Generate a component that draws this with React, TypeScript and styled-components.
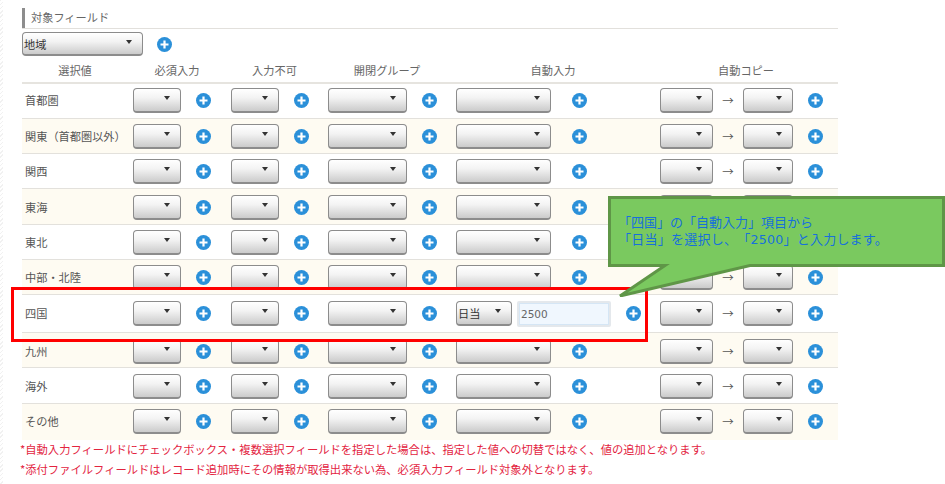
import styled, { createGlobalStyle } from "styled-components";

const GlobalStyle = createGlobalStyle`
  html, body {
    margin: 0;
    padding: 0;
    background: #fff;
  }
  body {
    font-family: "Noto Sans CJK JP", "Noto Sans", sans-serif;
    color: #555;
  }
`;

const Page = styled.div`
  position: relative;
  width: 945px;
  height: 484px;
  overflow: hidden;
  padding: 8px 107px 0 22px;
  box-sizing: border-box;
`;

const Hatch = styled.div`
  position: absolute;
  left: 0;
  top: 0;
  bottom: 0;
  width: 3px;
  background: repeating-linear-gradient(135deg, #f1f1f1 0 1px, #fff 1px 3px);
`;

const Title = styled.h2`
  margin: 0;
  height: 20px;
  line-height: 19px;
  border-bottom: 1px solid #e2e0dc;
  font-size: 11.2px;
  font-weight: 400;
  color: #666;
  display: flex;
`;

const TitleBar = styled.span`
  width: 3px;
  height: 20px;
  background: #8d8d8d;
  margin-right: 6px;
`;

const FieldRow = styled.div`
  display: flex;
  align-items: center;
  gap: 14px;
  height: 24px;
  margin-top: 3px;
`;

const Select = styled.button<{ $w: number }>`
  position: relative;
  flex: none;
  width: ${(p) => p.$w}px;
  height: 24.5px;
  padding: 0 0 0 1px;
  border: 1px solid #8c8c8c;
  border-bottom-width: 2px;
  border-radius: 4px;
  background: linear-gradient(#fff, #f3f3f3 40%, #cbcbcb);
  font: inherit;
  font-size: 11.2px;
  line-height: 20px;
  color: #333;
  text-align: left;
  box-sizing: border-box;
  &::after {
    content: "";
    position: absolute;
    right: 10px;
    top: 7px;
    border-left: 3px solid transparent;
    border-right: 3px solid transparent;
    border-top: 4px solid #333;
  }
`;

const Head = styled.div`
  display: grid;
  grid-template-columns: 111px 98px 97px 128px 204px 178px;
  height: 22px;
  margin-top: 4px;
  border-bottom: 2px solid #e6e4df;
`;

const HeadCell = styled.div<{ $pad?: number }>`
  text-align: center;
  font-size: 11.2px;
  line-height: 20px;
  color: #666;
  padding-right: ${(p) => p.$pad ?? 10}px;
`;

const Row = styled.div<{ $h: number; $top: number; $alt: boolean; $last: boolean }>`
  display: grid;
  grid-template-columns: 111px 98px 97px 128px 204px 178px;
  height: ${(p) => p.$h}px;
  box-sizing: border-box;
  padding-top: ${(p) => p.$top}px;
  border-bottom: 1px solid ${(p) => (p.$last ? "transparent" : "#e3e1dc")};
  background: ${(p) => (p.$alt ? "#fefbf2" : "#fff")};
`;

const Label = styled.div`
  font-size: 11.2px;
  line-height: 24px;
  padding-left: 3px;
  color: #555;
  white-space: nowrap;
  text-spacing-trim: space-all;
`;

const Cell = styled.div<{ $gap: number }>`
  display: flex;
  align-items: flex-start;
  gap: ${(p) => p.$gap}px;
`;

const PlusWrap = styled.span`
  flex: none;
  width: 15px;
  height: 24px;
  display: flex;
  align-items: center;
`;

const Arrow = styled.span`
  flex: none;
  width: 30px;
  text-align: center;
  font-size: 11.5px;
  line-height: 24px;
  color: #555;
`;

const PlusGap = styled.span`
  flex: none;
  width: 14.5px;
`;

const AmountInput = styled.input`
  flex: none;
  width: 94px;
  height: 26px;
  margin-left: -9.5px;
  padding: 0 0 0 2px;
  border: 2px solid #e4e8ec;
  outline: 1px solid #d5e6f5;
  outline-offset: -3px;
  border-radius: 2px;
  background: #f0f7fe;
  font-family: "DejaVu Sans", sans-serif;
  font-size: 10.5px;
  color: #666;
  box-sizing: border-box;
`;

const Notes = styled.div`
  margin: -1px 0 0 -2px;
  font-size: 11.3px;
  color: #e3243f;
  white-space: nowrap;
`;

const Note = styled.p`
  margin: 0;
  line-height: 20px;
`;

const Highlight = styled.div`
  position: absolute;
  left: 11px;
  top: 287px;
  width: 637px;
  height: 55px;
  border: 3px solid #f00;
  box-sizing: border-box;
`;

const Callout = styled.div`
  position: absolute;
  left: 608px;
  top: 196px;
  width: 337px;
  height: 101px;
`;

const CalloutShape = styled.svg`
  position: absolute;
  left: 0;
  top: 0;
`;

const CalloutText = styled.div`
  position: relative;
  padding: 18px 0 0 10px;
  font-size: 13px;
  line-height: 16.5px;
  color: #1770dc;
  white-space: nowrap;
  text-spacing-trim: space-all;
`;

const CalloutLine = styled.div<{ $spacing?: number }>`
  letter-spacing: ${(p) => p.$spacing ?? 0}px;
`;

const CalloutNumber = styled.span`
  font-family: "DejaVu Sans", sans-serif;
  font-size: 12.6px;
`;

function PlusIcon() {
  return (
    <svg width="15" height="15" viewBox="0 0 15 15">
      <circle cx="7.5" cy="7.5" r="7.5" fill="#2b90d9" />
      <path d="M7.5 3.5v8M3.5 7.5h8" stroke="#fff" strokeWidth="2.2" />
    </svg>
  );
}

function Plus() {
  return (
    <PlusWrap>
      <PlusIcon />
    </PlusWrap>
  );
}

const rows = [
  { name: "首都圏", h: 35, top: 4 },
  { name: "関東（首都圏以外）", h: 35, top: 5 },
  { name: "関西", h: 35, top: 5 },
  { name: "東海", h: 36, top: 6 },
  { name: "東北", h: 35, top: 5 },
  { name: "中部・北陸", h: 35, top: 5 },
  { name: "四国", h: 38, top: 6, filled: true },
  { name: "九州", h: 35, top: 6 },
  { name: "海外", h: 36, top: 6 },
  { name: "その他", h: 36, top: 5 },
];

export default function App() {
  return (
    <Page>
      <GlobalStyle />
      <Hatch />
      <Title>
        <TitleBar />
        対象フィールド
      </Title>
      <FieldRow>
        <Select $w={121}>地域</Select>
        <Plus />
      </FieldRow>
      <Head>
        <HeadCell $pad={5}>選択値</HeadCell>
        <HeadCell>必須入力</HeadCell>
        <HeadCell>入力不可</HeadCell>
        <HeadCell>開閉グループ</HeadCell>
        <HeadCell>自動入力</HeadCell>
        <HeadCell $pad={6}>自動コピー</HeadCell>
      </Head>
      {rows.map((row, index) => (
        <Row
          key={row.name}
          $h={row.h}
          $top={row.top}
          $alt={index % 2 === 1}
          $last={index === rows.length - 1}
        >
          <Label>{row.name}</Label>
          <Cell $gap={15}>
            <Select $w={48} />
            <Plus />
          </Cell>
          <Cell $gap={14.5}>
            <Select $w={48} />
            <Plus />
          </Cell>
          <Cell $gap={14.5}>
            <Select $w={79} />
            <Plus />
          </Cell>
          {row.filled ? (
            <Cell $gap={14.5}>
              <Select $w={56}>日当</Select>
              <AmountInput defaultValue="2500" />
              <Plus />
            </Cell>
          ) : (
            <Cell $gap={20.5}>
              <Select $w={95} />
              <Plus />
            </Cell>
          )}
          <Cell $gap={0}>
            <Select $w={53} />
            <Arrow>→</Arrow>
            <Select $w={50} />
            <PlusGap />
            <Plus />
          </Cell>
        </Row>
      ))}
      <Notes>
        <Note>
          *自動入力フィールドにチェックボックス・複数選択フィールドを指定した場合は、指定した値への切替ではなく、値の追加となります。
        </Note>
        <Note>
          *添付ファイルフィールドはレコード追加時にその情報が取得出来ない為、必須入力フィールド対象外となります。
        </Note>
      </Notes>
      <Highlight />
      <Callout>
        <CalloutShape width="337" height="101" viewBox="0 0 337 101">
          <path
            d="M1.5 1.5H335.5V69.5H142L12 100L57 69.5H1.5Z"
            fill="#7ac95f"
            stroke="#5f9647"
            strokeWidth="3"
          />
        </CalloutShape>
        <CalloutText>
          <CalloutLine>「四国」の「自動入力」項目から</CalloutLine>
          <CalloutLine $spacing={0.24}>
            「日当」を選択し、「<CalloutNumber>2500</CalloutNumber>」と入力します。
          </CalloutLine>
        </CalloutText>
      </Callout>
    </Page>
  );
}
